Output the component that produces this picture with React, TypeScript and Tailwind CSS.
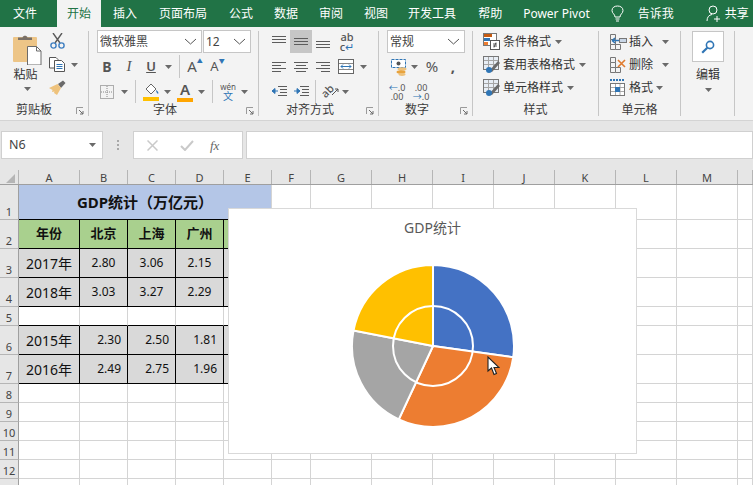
import type { ReactNode } from 'react';

const Caret = ({ className = '' }: { className?: string }) => (
  <svg width="7" height="4" viewBox="0 0 7 4" className={`shrink-0 ${className}`}>
    <path d="M0 0H7L3.5 4Z" fill="#6a6a6a" />
  </svg>
);

const Slot = ({ w, children, className = '' }: { w: string; children?: ReactNode; className?: string }) => (
  <div className={`flex h-[23px] shrink-0 items-center justify-center ${w} ${className}`}>{children}</div>
);

const VSep = () => <div className="h-[23px] w-px bg-[#c6c6c6]" />;

const Launcher = () => (
  <svg width="8" height="8" viewBox="0 0 8 8" className="absolute right-[4px] top-[4px]">
    <path d="M0.5 7V0.5H7" fill="none" stroke="#9a9a9a" />
    <path d="M3 3L7 7M7 4V7H4" fill="none" stroke="#6a6a6a" />
  </svg>
);

const Group = ({ w, label, labelPad = '', launcher, children }: { w: string; label?: string; labelPad?: string; launcher?: boolean; children: ReactNode }) => (
  <>
    <div className={`flex shrink-0 flex-col ${w}`}>
      <div className="h-[76px] pt-[3px]">{children}</div>
      {label && (
        <div className={`relative flex h-[14px] items-center justify-center text-[12px] leading-none text-[#3a3a3a] ${labelPad}`}>
          {label}
          {launcher && <Launcher />}
        </div>
      )}
    </div>
    <div className="mt-[4px] h-[85px] w-px shrink-0 bg-[#c6c6c6]" />
  </>
);

const Select = ({ w, label, labelClass = '' }: { w: string; label: string; labelClass?: string }) => (
  <div className={`flex h-[23px] items-center justify-between border border-[#c6c6c6] bg-white pl-[2px] pr-[4px] text-[12px] leading-none text-[#444] ${w} ${labelClass}`}>
    <span>{label}</span>
    <svg width="13" height="7" viewBox="0 0 13 7">
      <path d="M1 1L6.5 6L12 1" fill="none" stroke="#555" />
    </svg>
  </div>
);

const Lines = ({ rows }: { rows: number[][] }) => (
  <svg width="16" height="14" viewBox="0 0 16 14">
    {rows.map(([x1, x2, y]) => (
      <path key={`${x1}-${y}`} d={`M${x1} ${y + 0.5}H${x2}`} stroke="#5c5c5c" />
    ))}
  </svg>
);

const Scissors = () => (
  <svg width="15" height="16" viewBox="0 0 15 16">
    <path d="M3 0L10 10M12 0L5 10" stroke="#5a5a5a" strokeWidth="1.4" fill="none" />
    <circle cx="3.5" cy="12.5" r="2.6" fill="none" stroke="#3f7fc1" strokeWidth="1.4" />
    <circle cx="11.5" cy="12.5" r="2.6" fill="none" stroke="#3f7fc1" strokeWidth="1.4" />
  </svg>
);

const PasteIcon = () => (
  <svg width="29" height="31" viewBox="0 0 29 31">
    <rect x="0" y="3" width="24" height="25" rx="1" fill="#edc587" />
    <path d="M5 6V3.5H9.5C10 1 14 1 14.5 3.5H19V6Z" fill="#7a7066" />
    <path d="M14.5 12.5H23.5L28 17V31H14.5Z" fill="#fff" stroke="#6b6b6b" />
    <path d="M23.5 12.5V17H28" fill="none" stroke="#6b6b6b" />
  </svg>
);

const CopyIcon = () => (
  <svg width="16" height="15" viewBox="0 0 16 15">
    <path d="M0.5 0.5H7L9 2.5V11H0.5Z" fill="#fff" stroke="#555" />
    <path d="M5.5 3.5H12.5L15.5 6.5V14.5H5.5Z" fill="#fff" stroke="#555" />
    <path d="M7.5 7.5H13.5M7.5 9.5H13.5M7.5 11.5H13.5" stroke="#2f75b5" />
  </svg>
);

const BrushIcon = () => (
  <svg width="17" height="15" viewBox="0 0 17 15">
    <path d="M9 4L14 0.5L16.5 3L12 8Z" fill="#6a6a6a" />
    <path d="M0 8L8.5 4L12 8L8 15L5 13L5.5 11.5L3 12L3.5 10Z" fill="#eec27c" />
  </svg>
);

const LetterA = ({ bar, size = 'text-[15px]' }: { bar?: string; size?: string }) => (
  <div className={`flex flex-col items-center font-semibold leading-none text-[#555] ${size}`}>
    <span className="h-[15px]">A</span>
    {bar && <div className={`mt-[1px] h-[4px] w-[16px] ${bar}`} />}
  </div>
);

const GridDots = () => (
  <svg width="14" height="14" viewBox="0 0 14 14">
    <rect x="0.5" y="0.5" width="13" height="13" fill="none" stroke="#666" strokeDasharray="1 1" />
    <path d="M7 1V13M1 7H13" stroke="#888" strokeDasharray="1 1" />
  </svg>
);

const FillIcon = () => (
  <svg width="17" height="19" viewBox="0 0 17 19">
    <path d="M3 7L8 2L13 7L8 12Z" fill="#fff" stroke="#666" />
    <path d="M13 8C15 9 16 11 15 12C14 11 13 10 13 8Z" fill="#2f75b5" />
    <rect x="0" y="15" width="16" height="4" fill="#ffc000" />
  </svg>
);

const Wen = () => (
  <div className="flex flex-col items-center leading-none">
    <span className="text-[8px] text-[#555]">wén</span>
    <span className="text-[10px] text-[#2f75b5]">文</span>
  </div>
);

const MergeIcon = () => (
  <svg width="16" height="15" viewBox="0 0 16 15">
    <rect x="0.5" y="0.5" width="15" height="14" fill="#fff" stroke="#666" />
    <path d="M1 4.5H15M1 10.5H15" stroke="#888" />
    <path d="M3 7.5H13M3 7.5L5 5.5M3 7.5L5 9.5M13 7.5L11 5.5M13 7.5L11 9.5" stroke="#2f75b5" fill="none" />
  </svg>
);

const CurrencyIcon = () => (
  <svg width="18" height="18" viewBox="0 0 18 18">
    <rect x="0.5" y="1.5" width="14" height="8" fill="#fff" stroke="#2f75b5" strokeDasharray="3 1" />
    <circle cx="7.5" cy="5.5" r="2" fill="#555" />
    <ellipse cx="11" cy="11" rx="4.5" ry="1.8" fill="#eec27c" />
    <ellipse cx="10" cy="14" rx="4.5" ry="1.8" fill="#e8a33d" />
    <ellipse cx="11" cy="16.5" rx="3.5" ry="1.4" fill="#eec27c" />
  </svg>
);

const StyleIcon = ({ cond }: { cond?: boolean }) => (
  <svg width="18" height="17" viewBox="0 0 18 17">
    {cond ? (
      <>
        <rect x="0.5" y="0.5" width="13" height="12" fill="#fff" stroke="#777" />
        <rect x="1" y="1" width="8" height="3" fill="#c55a11" />
        <rect x="1" y="5" width="6" height="3" fill="#2f75b5" />
        <rect x="1" y="9" width="4" height="3" fill="#ed7d31" />
        <rect x="7.5" y="7.5" width="9" height="9" fill="#fff" stroke="#555" />
        <path d="M10 11H14M10 13H14M13 9.5L11 14.5" stroke="#333" strokeWidth="0.8" />
      </>
    ) : (
      <>
        <rect x="0.5" y="0.5" width="15" height="13" fill="#e8eef5" stroke="#777" />
        <path d="M1 4.5H15M1 8.5H15M5.5 1V13M10.5 1V13" stroke="#a5a5a5" />
        <path d="M6 15L15 5L17 7L9 16Z" fill="#6a6a6a" />
        <circle cx="6" cy="14" r="3" fill="#2f75b5" />
      </>
    )}
  </svg>
);

const CellIcon = ({ kind }: { kind: 'insert' | 'delete' | 'format' }) => (
  <svg width="18" height="17" viewBox="0 0 18 17">
    {kind === 'format' ? (
      <>
        <path d="M1 1H15" stroke="#2f75b5" strokeDasharray="2 1" strokeWidth="2" />
        <rect x="1.5" y="4.5" width="14" height="12" fill="#fff" stroke="#777" />
        <path d="M2 8.5H15M2 12.5H15M6.5 5V16M11 5V16" stroke="#aaa" />
        <rect x="6" y="8" width="5" height="5" fill="#2f75b5" />
      </>
    ) : (
      <>
        <path d="M1.5 1.5H6.5V6.5H1.5ZM1.5 6.5V11.5H6.5V6.5M1.5 11.5V16.5H6.5V11.5M6.5 11.5H11.5V16.5H6.5" fill="none" stroke="#777" />
        {kind === 'insert' ? (
          <>
            <rect x="10.5" y="5.5" width="7" height="4" fill="#c9d6e6" stroke="#777" />
            <path d="M10 7.5H3M3 7.5L6 5M3 7.5L6 10" fill="none" stroke="#2f75b5" strokeWidth="1.4" />
          </>
        ) : (
          <path d="M9 4L16 11M16 4L9 11" stroke="#e07b2e" strokeWidth="1.6" />
        )}
      </>
    )}
  </svg>
);

const StyleRow = ({ label, cond, gap = 'ml-[4px]' }: { label: string; cond?: boolean; gap?: string }) => (
  <div className="flex h-[23px] items-center pl-[10px]">
    <StyleIcon cond={cond} />
    <span className="ml-[2px] text-[12px] leading-none text-[#333]">{label}</span>
    <Caret className={gap} />
  </div>
);

const CellRow = ({ label, kind, gap }: { label: string; kind: 'insert' | 'delete' | 'format'; gap: string }) => (
  <div className="flex h-[23px] items-center pl-[10px]">
    <CellIcon kind={kind} />
    <span className="ml-[2px] text-[12px] leading-none text-[#333]">{label}</span>
    <Caret className={gap} />
  </div>
);

const Ribbon = () => (
  <div className="flex h-[94px] border-b border-[#d4d4d4] bg-[#f3f3f3]">
    <Group w="w-[88px]" label="剪贴板" labelPad="pr-[20px]" launcher>
      <div className="flex">
        <div className="ml-[13px] flex w-[29px] flex-col items-center pt-[4px]">
          <PasteIcon />
          <span className="-ml-[4px] mt-[3px] whitespace-nowrap text-[12px] leading-[14px] text-[#333]">粘贴</span>
          <Caret className="mt-[5px]" />
        </div>
        <div className="ml-[7px] flex flex-col pt-[3px]">
          <div className="ml-[1px]"><Scissors /></div>
          <div className="mt-[8px] flex items-center">
            <CopyIcon />
            <Caret className="ml-[6px]" />
          </div>
          <div className="mt-[8px]"><BrushIcon /></div>
        </div>
      </div>
    </Group>

    <Group w="w-[169px]" label="字体" labelPad="pr-[17px]" launcher>
      <div className="flex flex-col gap-[2px]">
        <div className="flex gap-px pl-[8px]">
          <Select w="w-[105px]" label="微软雅黑" />
          <Select w="w-[48px]" label="12" />
        </div>
        <div className="flex items-center pl-[7px] text-[#555]">
          <Slot w="w-[22px]" className="text-[14px] font-bold">B</Slot>
          <Slot w="w-[22px]" className="font-['Liberation_Serif',serif] text-[15px] italic">I</Slot>
          <Slot w="w-[22px]" className="text-[13px] font-semibold underline">U</Slot>
          <Slot w="w-[12px]"><Caret /></Slot>
          <Slot w="w-[10px]"><VSep /></Slot>
          <Slot w="w-[22px]" className="gap-0 text-[15px]">A<span className="-mt-[10px] text-[6px] text-[#2f75b5]">▲</span></Slot>
          <Slot w="w-[23px]" className="text-[13px]">A<span className="-mt-[10px] text-[6px] text-[#2f75b5]">▼</span></Slot>
        </div>
        <div className="flex items-center pl-[7px]">
          <Slot w="w-[22px]"><GridDots /></Slot>
          <Slot w="w-[12px]"><Caret /></Slot>
          <Slot w="w-[10px]"><VSep /></Slot>
          <Slot w="w-[22px]"><FillIcon /></Slot>
          <Slot w="w-[10px]"><Caret /></Slot>
          <Slot w="w-[26px]"><LetterA bar="bg-[#ffa500]" /></Slot>
          <Slot w="w-[6px]"><Caret /></Slot>
          <Slot w="w-[16px]"><VSep /></Slot>
          <Slot w="w-[16px]"><Wen /></Slot>
          <Slot w="w-[16px]"><Caret /></Slot>
        </div>
      </div>
    </Group>

    <Group w="w-[119px]" label="对齐方式" labelPad="pr-[17px]" launcher>
      <div className="flex flex-col gap-[2px]">
        <div className="flex items-center pl-[9px]">
          <Slot w="w-[22px]"><Lines rows={[[1, 15, 1], [1, 15, 4], [1, 15, 7]]} /></Slot>
          <Slot w="w-[22px]" className="bg-[#c6c6c6]"><Lines rows={[[1, 15, 3], [1, 15, 6], [1, 15, 9]]} /></Slot>
          <Slot w="w-[22px]"><Lines rows={[[1, 15, 6], [1, 15, 9], [1, 15, 12]]} /></Slot>
          <Slot w="w-[26px]" className="flex-col text-[11px] font-medium leading-[10px] text-[#555]"><span>ab</span><span>c<span className="text-[#2f75b5]">↵</span></span></Slot>
        </div>
        <div className="flex items-center pl-[9px]">
          <Slot w="w-[22px]"><Lines rows={[[1, 15, 2], [1, 10, 5], [1, 15, 8], [1, 10, 11]]} /></Slot>
          <Slot w="w-[22px]"><Lines rows={[[1, 15, 2], [3, 13, 5], [1, 15, 8], [3, 13, 11]]} /></Slot>
          <Slot w="w-[22px]"><Lines rows={[[1, 15, 2], [6, 15, 5], [1, 15, 8], [6, 15, 11]]} /></Slot>
          <Slot w="w-[24px]"><MergeIcon /></Slot>
          <Slot w="w-[10px]"><Caret /></Slot>
        </div>
        <div className="flex items-center pl-[9px]">
          <Slot w="w-[22px]">
            <svg width="17" height="13" viewBox="0 0 17 13">
              <path d="M7 1.5H16M9 4.5H16M9 7.5H16M7 10.5H16" stroke="#5c5c5c" />
              <path d="M1 6H7M1 6L4 3.5V8.5Z" stroke="#2f75b5" fill="#2f75b5" />
            </svg>
          </Slot>
          <Slot w="w-[22px]">
            <svg width="17" height="13" viewBox="0 0 17 13">
              <path d="M7 1.5H16M9 4.5H16M9 7.5H16M7 10.5H16" stroke="#5c5c5c" />
              <path d="M1 6H7M7 6L4 3.5V8.5Z" stroke="#2f75b5" fill="#2f75b5" />
            </svg>
          </Slot>
          <Slot w="w-[6px]"><VSep /></Slot>
          <Slot w="w-[24px]" className="text-[11px] font-medium text-[#555]">
            <span className="-rotate-45">ab</span>
            <svg width="7" height="7" viewBox="0 0 7 7" className="-ml-[2px]"><path d="M0 7L6 1M3 1H6V4" fill="none" stroke="#555" /></svg>
          </Slot>
          <Slot w="w-[6px]"><Caret /></Slot>
        </div>
      </div>
    </Group>

    <Group w="w-[93px]" label="数字" labelPad="pr-[17px]" launcher>
      <div className="flex flex-col gap-[2px]">
        <div className="pl-[8px]"><Select w="w-[78px]" label="常规" /></div>
        <div className="flex items-center pl-[11px] text-[#555]">
          <Slot w="w-[20px]"><CurrencyIcon /></Slot>
          <Slot w="w-[8px]"><Caret /></Slot>
          <Slot w="w-[28px]" className="text-[15px]">%</Slot>
          <Slot w="w-[14px]" className="text-[15px] font-bold">,</Slot>
        </div>
        <div className="flex items-center pl-[7px] text-[#555]">
          <Slot w="w-[22px]" className="flex-col text-[9px] leading-[9px]">
            <span><span className="text-[#2f75b5]">←</span>.0</span>
            <span>.00</span>
          </Slot>
          <Slot w="w-[22px]" className="ml-[2px] flex-col text-[9px] leading-[9px]">
            <span>.00</span>
            <span><span className="text-[#2f75b5]">→</span>.0</span>
          </Slot>
        </div>
      </div>
    </Group>

    <Group w="w-[125px]" label="样式">
      <StyleRow label="条件格式" cond />
      <StyleRow label="套用表格格式" />
      <StyleRow label="单元格样式" />
    </Group>

    <Group w="w-[81px]" label="单元格">
      <CellRow label="插入" kind="insert" gap="ml-[9px]" />
      <CellRow label="删除" kind="delete" gap="ml-[9px]" />
      <CellRow label="格式" kind="format" gap="ml-[3px]" />
    </Group>

    <Group w="w-[53px]">
      <div className="flex flex-col items-center pl-[1px] pt-px">
        <div className="flex h-[31px] w-[32px] items-center justify-center border border-[#c6c6c6] bg-white">
          <svg width="14" height="14" viewBox="0 0 14 14">
            <circle cx="9" cy="5" r="3.6" fill="none" stroke="#2f75b5" strokeWidth="1.6" />
            <path d="M6.3 7.7L1.2 12.8" stroke="#2f75b5" strokeWidth="2.2" />
          </svg>
        </div>
        <span className="mt-[6px] text-[12px] leading-[14px] text-[#333]">编辑</span>
        <Caret className="mt-[6px]" />
      </div>
    </Group>
  </div>
);

const tabs = [
  { label: '插入', ml: 'ml-[12px]' },
  { label: '页面布局', ml: 'ml-[22px]' },
  { label: '公式', ml: 'ml-[22px]' },
  { label: '数据', ml: 'ml-[21px]' },
  { label: '审阅', ml: 'ml-[21px]' },
  { label: '视图', ml: 'ml-[21px]' },
  { label: '开发工具', ml: 'ml-[20px]' },
  { label: '帮助', ml: 'ml-[22px]' },
  { label: 'Power Pivot', ml: 'ml-[21px]' },
];

const TitleBar = () => (
  <div className="flex h-[27px] items-center whitespace-nowrap bg-[#217346] pl-[13px] text-[12px] leading-none text-white">
    <span>文件</span>
    <div className="ml-[20px] flex h-[27px] w-[44px] items-center justify-center bg-[#f3f3f3] text-[#217346]">开始</div>
    {tabs.map((t) => (
      <span key={t.label} className={t.ml}>{t.label}</span>
    ))}
    <svg width="13" height="17" viewBox="0 0 13 17" className="ml-[21px]">
      <path d="M4 12C4 9 1 8.500 1 5.500C1 2.500 3.500 1 6.500 1C9.500 1 12 2.500 12 5.500C12 8.500 9 9 9 12ZM4.500 14H8.500M5 16H8" fill="none" stroke="#fff" />
    </svg>
    <span className="ml-[14px]">告诉我</span>
    <svg width="16" height="17" viewBox="0 0 16 17" className="ml-[32px]">
      <circle cx="7" cy="5" r="4" fill="none" stroke="#fff" />
      <path d="M1 16C1 12 3 10 6 9.500M11 11V17M8 14H14" fill="none" stroke="#fff" />
    </svg>
    <span className="ml-[3px]">共享</span>
  </div>
);

const FormulaBar = () => (
  <div className="flex h-[49px] items-start bg-[#e6e6e6] pt-[10px]">
    <div className="ml-px flex h-[28px] w-[102px] items-center justify-between border border-[#d0d0d0] bg-white pl-[7px] pr-[6px] text-[12.500px] text-[#444]">
      <span>N6</span>
      <Caret />
    </div>
    <div className="ml-[13px] flex h-[28px] w-[3px] flex-col items-center justify-center gap-[2px]">
      <i className="h-[2px] w-[2px] bg-[#a8a8a8]" />
      <i className="h-[2px] w-[2px] bg-[#a8a8a8]" />
      <i className="h-[2px] w-[2px] bg-[#a8a8a8]" />
    </div>
    <div className="ml-[14px] flex h-[28px] w-[110px] items-center border border-[#d0d0d0] bg-white">
      <svg width="11" height="11" viewBox="0 0 11 11" className="ml-[13px]">
        <path d="M0.500 0.500L10.500 10.500M10.500 0.500L0.500 10.500" stroke="#c9c9c9" strokeWidth="1.500" />
      </svg>
      <svg width="14" height="11" viewBox="0 0 14 11" className="ml-[22px]">
        <path d="M1 6L5 10L13 1" fill="none" stroke="#c9c9c9" strokeWidth="2" />
      </svg>
      <span className="ml-[16px] font-['Liberation_Serif',serif] text-[13px] italic leading-none text-[#666]">fx</span>
    </div>
    <div className="ml-[3px] h-[28px] flex-1 border border-[#d0d0d0] bg-white" />
  </div>
);

const colTemplate = 'grid grid-cols-[19px_61px_48px_48px_48px_48px_39px_61px_61px_61px_61px_61px_61px_61px_15px]';
const columns = ['A', 'B', 'C', 'D', 'E', 'F', 'G', 'H', 'I', 'J', 'K', 'L', 'M', ''];

const ColumnHeader = () => (
  <div className={`${colTemplate} h-[15px] border-b border-[#9f9f9f] bg-[#e6e6e6]`}>
    <div className="relative border-r border-[#b5b5b5]">
      <svg width="9" height="9" viewBox="0 0 9 9" className="absolute bottom-[1px] right-[3px]">
        <path d="M9 0V9H0Z" fill="#b5b5b5" />
      </svg>
    </div>
    {columns.map((c) => (
      <div key={c || 'end'} className="flex items-center justify-center border-r border-[#b5b5b5] text-[11px] leading-none text-[#444]">{c}</div>
    ))}
  </div>
);

type Row = { n: number; h: string; cells?: string[]; right?: boolean; head?: boolean };

const rows: Row[] = [
  { n: 2, h: 'h-[29px]', cells: ['年份', '北京', '上海', '广州', '深圳'], head: true },
  { n: 3, h: 'h-[29px]', cells: ['2017年', '2.80', '3.06', '2.15', '2.24'] },
  { n: 4, h: 'h-[29px]', cells: ['2018年', '3.03', '3.27', '2.29', '2.42'] },
  { n: 5, h: 'h-[19px]' },
  { n: 6, h: 'h-[29px]', cells: ['2015年', '2.30', '2.50', '1.81', '1.75'], right: true },
  { n: 7, h: 'h-[29px]', cells: ['2016年', '2.49', '2.75', '1.96', '1.95'], right: true },
  { n: 8, h: 'h-[19px]' },
  { n: 9, h: 'h-[19px]' },
  { n: 10, h: 'h-[19px]' },
  { n: 11, h: 'h-[19px]' },
  { n: 12, h: 'h-[19px]' },
  { n: 13, h: 'h-[19px]' },
];

const RowHead = ({ n }: { n: number }) => (
  <div className="flex items-end justify-center border-b border-r border-[#b5b5b5] border-r-[#9f9f9f] bg-[#e6e6e6] pb-[1px] text-[11px] leading-[13px] text-[#444]">{n}</div>
);

const blanks = (n: number, from: number) =>
  Array.from({ length: n }, (_, i) => <div key={from + i} className="border-b border-r border-[#d4d4d4]" />);

const SheetRow = ({ row }: { row: Row }) => (
  <div className={`${colTemplate} ${row.h}`}>
    <RowHead n={row.n} />
    {row.cells
      ? row.cells.map((c, i) => (
          <div
            key={i}
            className={`flex items-center border-b border-r border-black ${
              row.head
                ? 'justify-center bg-[#a9d08e] text-[13px] font-bold text-[#111]'
                : `bg-[#d9d9d9] text-[#111] ${
                    i === 0
                      ? 'justify-center text-[14px]'
                      : row.right
                        ? 'justify-end pr-[6px] text-[12px]'
                        : 'justify-center text-[12px]'
                  }`
            }`}
          >
            {c}
          </div>
        ))
      : row.n === 5
        ? Array.from({ length: 5 }, (_, i) => <div key={i} className="border-b border-r border-b-black border-r-[#d4d4d4]" />)
        : blanks(5, 0)}
    {blanks(9, 5)}
  </div>
);

const slices = [
  { color: '#4472c4', from: 0, to: 98 },
  { color: '#ed7d31', from: 98, to: 205 },
  { color: '#a5a5a5', from: 205, to: 281 },
  { color: '#ffc000', from: 281, to: 360 },
];

const point = (deg: number, r: number) => {
  const a = (deg * Math.PI) / 180;
  return `${(82 + r * Math.sin(a)).toFixed(2)} ${(82 - r * Math.cos(a)).toFixed(2)}`;
};

const Chart = () => (
  <div className="absolute left-[228px] top-[208px] flex h-[246px] w-[409px] flex-col items-center border border-[#d9d9d9] bg-white">
    <div className="flex h-[55px] items-start pt-[9px] text-[14px] leading-[20px] text-[#595959]">GDP统计</div>
    <svg width="164" height="164" viewBox="0 0 164 164">
      {slices.map((s) => (
        <path
          key={s.color}
          d={`M82 82L${point(s.from, 81)}A81 81 0 0 1 ${point(s.to, 81)}Z`}
          fill={s.color}
          stroke="#fff"
          strokeWidth="2"
        />
      ))}
      <circle cx="82" cy="82" r="40" fill="none" stroke="#fff" strokeWidth="2" />
    </svg>
  </div>
);

const Cursor = () => (
  <svg width="13" height="20" viewBox="0 0 13 20" className="absolute left-[487px] top-[356px]">
    <path d="M1 1V15L4.500 12L7 18.500L9.500 17.500L7 11.500L12 11.500Z" fill="#fff" stroke="#222" strokeWidth="1.100" />
  </svg>
);

const App = () => (
  <div className="relative h-[485px] w-[753px] overflow-hidden bg-white font-['Noto_Sans','Noto_Sans_CJK_SC',sans-serif]">
    <TitleBar />
    <Ribbon />
    <FormulaBar />
    <ColumnHeader />
    <div className={`${colTemplate} h-[35px]`}>
      <RowHead n={1} />
      <div className="col-span-5 flex items-center justify-center border-b border-r border-b-black border-r-[#d4d4d4] bg-[#b4c6e7] text-[15px] font-bold leading-none text-[#111]">
        GDP统计（万亿元）
      </div>
      {blanks(9, 5)}
    </div>
    {rows.map((row) => (
      <SheetRow key={row.n} row={row} />
    ))}
    <Chart />
    <Cursor />
  </div>
);

export default App;
